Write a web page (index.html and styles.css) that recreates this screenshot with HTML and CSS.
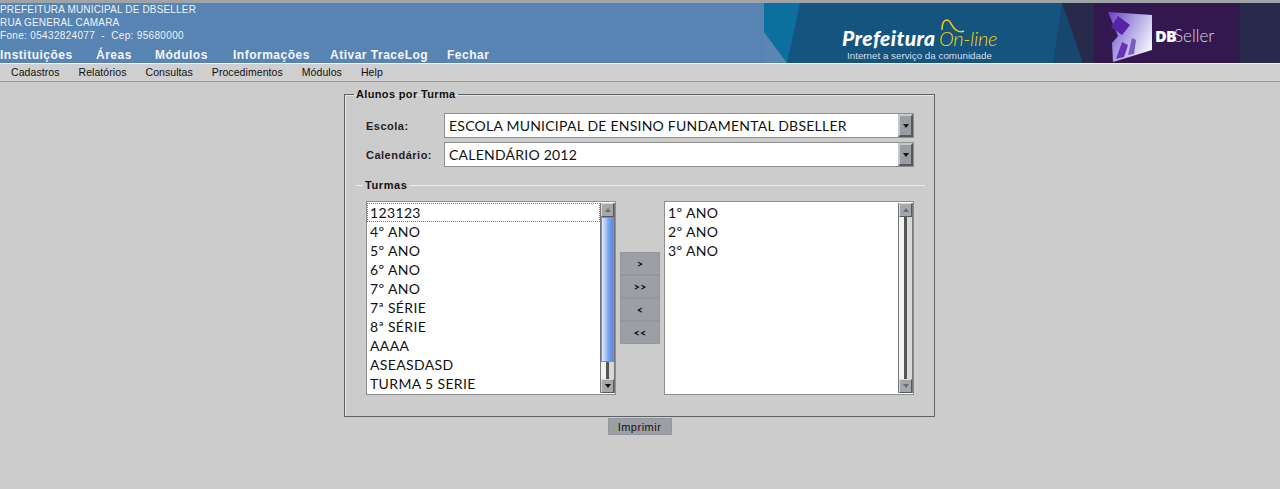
FILE: index.html
```html
<!DOCTYPE html>
<html lang="pt-BR">

<head>
    <meta charset="UTF-8">
    <title>Alunos por Turma</title>
    <link rel="stylesheet" href="styles.css">
</head>

<body>

    <!-- Top header -->
    <header class="topo">
        <div class="topo-info">
            <div class="dados">
                <p>PREFEITURA MUNICIPAL DE DBSELLER</p>
                <p>RUA GENERAL CAMARA</p>
                <p class="fone">Fone: 05432824077 &nbsp;-&nbsp; Cep: 95680000</p>
            </div>
            <nav class="nav-principal">
                <a class="w-inst">Instituições</a>
                <a class="w-area">Áreas</a>
                <a class="w-mod">Módulos</a>
                <a class="w-info">Informações</a>
                <a class="w-trace">Ativar TraceLog</a>
                <a>Fechar</a>
            </nav>
        </div>
        <svg class="banner" width="516" height="60" viewBox="0 0 516 60">
            <defs>
                <linearGradient id="logoFace" x1="0" y1="0" x2="1" y2="0.6">
                    <stop offset="0" stop-color="#6a3fc0"/>
                    <stop offset="0.5" stop-color="#a99ce0"/>
                    <stop offset="1" stop-color="#f1eff9"/>
                </linearGradient>
            </defs>
            <rect width="516" height="60" fill="#14547f"/>
            <polygon points="0,0 36,0 23,60 0,29" fill="#0b6f9f"/>
            <polygon points="0,29 23,60 0,60" fill="#5a86b4"/>
            <polygon points="298,0 319,60 289,60" fill="#17476f"/>
            <polygon points="298,0 516,0 516,60 319,60" fill="#272a4a"/>
            <rect x="330" y="0" width="146" height="60" fill="#33184f"/>

            <path class="til" d="M178 27c0-5 1-10 5-10 4 0 4 7 9 10 3 2 6 2 8 1"/>
            <text class="txt-pref" x="78" y="43">Prefeitura</text>
            <text class="txt-online" x="175" y="43">On-line</text>
            <text class="txt-slogan" x="83" y="55.5">Internet a serviço da comunidade</text>

            <path d="M344 9l44 3v35l-39 12-1-19 6-7z" fill="url(#logoFace)"/>
            <path d="M354 13l12 9-8 10-11-8z" fill="#5a22a8"/>
            <path d="M352 56l6-17 6 3-4 12z" fill="#6a32b8"/>
            <path d="M364 52l4-17 4 2-2 14z" fill="#7a5cc0"/>
            <text class="txt-db" x="391" y="39">DB</text>
            <text class="txt-seller" x="410" y="39">Seller</text>
        </svg>
    </header>

    <!-- Sub menu -->
    <nav class="submenu">
        <a>Cadastros</a>
        <a>Relatórios</a>
        <a>Consultas</a>
        <a>Procedimentos</a>
        <a>Módulos</a>
        <a>Help</a>
    </nav>

    <main class="pagina">
        <form class="form-alunos">
            <fieldset class="grupo">
                <legend>Alunos por Turma</legend>

                <div class="campos">
                    <label>Escola:</label>
                    <div class="combo">
                        <span>ESCOLA MUNICIPAL DE ENSINO FUNDAMENTAL DBSELLER</span>
                        <i class="combo-seta"><b class="seta-baixo"></b></i>
                    </div>
                    <label>Calendário:</label>
                    <div class="combo">
                        <span>CALENDÁRIO 2012</span>
                        <i class="combo-seta"><b class="seta-baixo"></b></i>
                    </div>
                </div>

                <fieldset class="grupo-turmas">
                    <legend>Turmas</legend>
                    <div class="listas">
                        <div class="lista">
                            <ul>
                                <li class="foco">123123</li>
                                <li>4º ANO</li>
                                <li>5º ANO</li>
                                <li>6º ANO</li>
                                <li>7º ANO</li>
                                <li>7ª SÉRIE</li>
                                <li>8ª SÉRIE</li>
                                <li>AAAA</li>
                                <li>ASEASDASD</li>
                                <li>TURMA 5 SERIE</li>
                            </ul>
                            <div class="barra">
                                <i class="barra-btn"><b class="seta-cima"></b></i>
                                <i class="barra-thumb"></i>
                                <i class="barra-trilho"></i>
                                <i class="barra-btn"><b class="seta-baixo"></b></i>
                            </div>
                        </div>

                        <div class="botoes">
                            <button type="button">&gt;</button>
                            <button type="button">&gt;&gt;</button>
                            <button type="button">&lt;</button>
                            <button type="button">&lt;&lt;</button>
                        </div>

                        <div class="lista">
                            <ul>
                                <li>1º ANO</li>
                                <li>2º ANO</li>
                                <li>3º ANO</li>
                            </ul>
                            <div class="barra">
                                <i class="barra-btn"><b class="seta-cima"></b></i>
                                <i class="barra-trilho"></i>
                                <i class="barra-btn"><b class="seta-baixo claro"></b></i>
                            </div>
                        </div>
                    </div>
                </fieldset>
            </fieldset>

            <button type="button" class="btn-imprimir">Imprimir</button>
        </form>
    </main>

</body>

</html>
```

FILE: styles.css
```css
/* Resetting some default styles */
* {
    margin: 0;
    padding: 0;
    box-sizing: border-box;
}

body {
    font-family: 'Liberation Sans', Arial, sans-serif;
    background-color: #cccccc;
    color: #111;
    height: 489px;
    overflow: hidden;
}

/* Header */
.topo {
    display: flex;
    justify-content: space-between;
    height: 64px;
    background-color: #5784b2;
    border-top: 3px solid #a0a3a7;
    border-bottom: 1px solid #f2f2f2;
}

.topo-info {
    display: flex;
    flex-direction: column;
    color: #eef2f6;
}

.dados {
    font-size: 10px;
    line-height: 13px;
    letter-spacing: 0.17px;
}

.dados .fone {
    letter-spacing: 0.33px;
}

.nav-principal {
    display: flex;
    margin-top: 7px;
    font-size: 12px;
    font-weight: bold;
    line-height: 13px;
    letter-spacing: 0.5px;
    color: #f4f6f8;
}

.w-inst { width: 96px; }
.w-area { width: 59px; }
.w-mod { width: 78px; }
.w-info { width: 97px; }
.w-trace { width: 117px; }

.banner {
    display: block;
    flex-shrink: 0;
}

.til {
    fill: none;
    stroke: #f2d40a;
    stroke-width: 1.5;
}

.txt-pref {
    font-family: 'Lato', sans-serif;
    font-size: 21px;
    font-weight: 900;
    font-style: italic;
    letter-spacing: 0.4px;
    fill: #fff;
}

.txt-online {
    font-family: 'Lato', sans-serif;
    font-size: 20px;
    font-style: italic;
    font-weight: 300;
    letter-spacing: -0.3px;
    fill: #f2d40a;
}

.txt-slogan {
    font-family: 'Liberation Sans', sans-serif;
    font-size: 9.8px;
    fill: #d5dfe8;
}

.txt-db {
    font-family: 'Open Sans', sans-serif;
    font-size: 16px;
    font-weight: 800;
    letter-spacing: -0.8px;
    fill: #fff;
}

.txt-seller {
    font-family: 'Lato', sans-serif;
    font-size: 17px;
    font-weight: 300;
    fill: #d8d8e0;
}

/* Sub menu */
.submenu {
    display: flex;
    gap: 19px;
    height: 18px;
    padding-left: 11px;
    font-size: 10.5px;
    line-height: 16px;
    letter-spacing: 0.07px;
    border-bottom: 1px solid #9a9a9a;
    background-color: #cfcfcf;
}

/* Form */
.pagina {
    display: flex;
    justify-content: center;
    padding-top: 5px;
}

.form-alunos {
    display: flex;
    flex-direction: column;
    align-items: center;
    width: 591px;
    margin-left: -1px;
}

.grupo {
    width: 591px;
    height: 330px;
    padding: 12px 9px 0 11px;
    border: 1px solid #5f6368;
    box-shadow: inset 1px 1px 0 #e4e4e4;
}

.grupo > legend {
    margin-left: -2px;
    padding: 0 2px;
    font-size: 11px;
    font-weight: bold;
    line-height: 14px;
    letter-spacing: 0.35px;
}

.campos {
    display: grid;
    grid-template-columns: 78px 470px;
    grid-auto-rows: 25px;
    row-gap: 4px;
    align-items: center;
    margin-left: 10px;
}

.campos label {
    font-size: 11px;
    font-weight: bold;
    letter-spacing: 0.5px;
    color: #222;
}

.combo {
    display: flex;
    justify-content: space-between;
    height: 25px;
    padding-left: 4px;
    border: 1px solid #8f8f8f;
    background-color: #fff;
    font-family: 'Lato', sans-serif;
    font-size: 14px;
    line-height: 23px;
    letter-spacing: 0.23px;
}

.combo-seta {
    display: flex;
    align-items: center;
    justify-content: center;
    width: 15px;
    background: #9a9ea3;
    border: 2px solid;
    border-color: #c6c8ca #55595e #55595e #c6c8ca;
}

.seta-baixo,
.seta-cima {
    display: block;
    width: 0;
    height: 0;
    border-left: 3px solid transparent;
    border-right: 3px solid transparent;
}

.seta-baixo { border-top: 4px solid #111; }
.seta-cima { border-bottom: 4px solid #6a6d72; }
.seta-baixo.claro { border-top-color: #6a6d72; }

/* Turmas */
.grupo-turmas {
    margin-top: 12px;
    height: 217px;
    padding: 0 9px 0 10px;
    border: 0;
    border-top: 1px solid #ececec;
}

.grupo-turmas > legend {
    margin-left: -3px;
    padding: 0 2px;
    font-size: 11px;
    font-weight: bold;
    line-height: 13px;
    letter-spacing: 0.6px;
}

.listas {
    display: flex;
    align-items: center;
    gap: 4px;
    margin-top: 9px;
}

.lista {
    display: flex;
    justify-content: space-between;
    width: 250px;
    height: 194px;
    padding: 1px 0;
    border: 1px solid #8f8f8f;
    background-color: #fff;
}

.lista ul {
    flex: 1;
    list-style: none;
    font-family: 'Lato', sans-serif;
    font-size: 14px;
    letter-spacing: 0.35px;
}

.lista li {
    height: 19px;
    padding-left: 3px;
    line-height: 19px;
}

.lista li.foco {
    outline: 1px dotted #5c7fc4;
    outline-offset: -1px;
}

.barra {
    display: flex;
    flex-direction: column;
    width: 15px;
    border: 1px solid #777;
    border-width: 0 1px;
    background-color: #cfcfcf;
}

.barra-btn {
    display: flex;
    align-items: center;
    justify-content: center;
    height: 14px;
    flex-shrink: 0;
    background: #a4a7ab;
    border: 1px solid;
    border-color: #d6d7d9 #55595e #55595e #d6d7d9;
}

.barra-thumb {
    height: 145px;
    background: linear-gradient(to right, #e6ecf8, #7ea4ee 60%, #5f86dc);
    border: 1px solid #6f8fd8;
}

.barra-trilho {
    flex: 1;
    background: linear-gradient(to right, #f2f2f2 0 5px, #555 5px 8px, #d8d8d8 8px);
}

.botoes {
    display: flex;
    flex-direction: column;
}

.botoes button {
    width: 40px;
    height: 23px;
    border: 1px solid #94979c;
    background-color: #9ca0a5;
    font-family: 'Lato', sans-serif;
    font-size: 11px;
    font-weight: bold;
    color: #111;
}

.btn-imprimir {
    width: 64px;
    height: 17px;
    margin-top: 1px;
    border: 1px solid #94979c;
    background-color: #9ca0a5;
    font-family: 'Liberation Sans', Arial, sans-serif;
    font-size: 11px;
    letter-spacing: 0.5px;
    color: #111;
}
```
